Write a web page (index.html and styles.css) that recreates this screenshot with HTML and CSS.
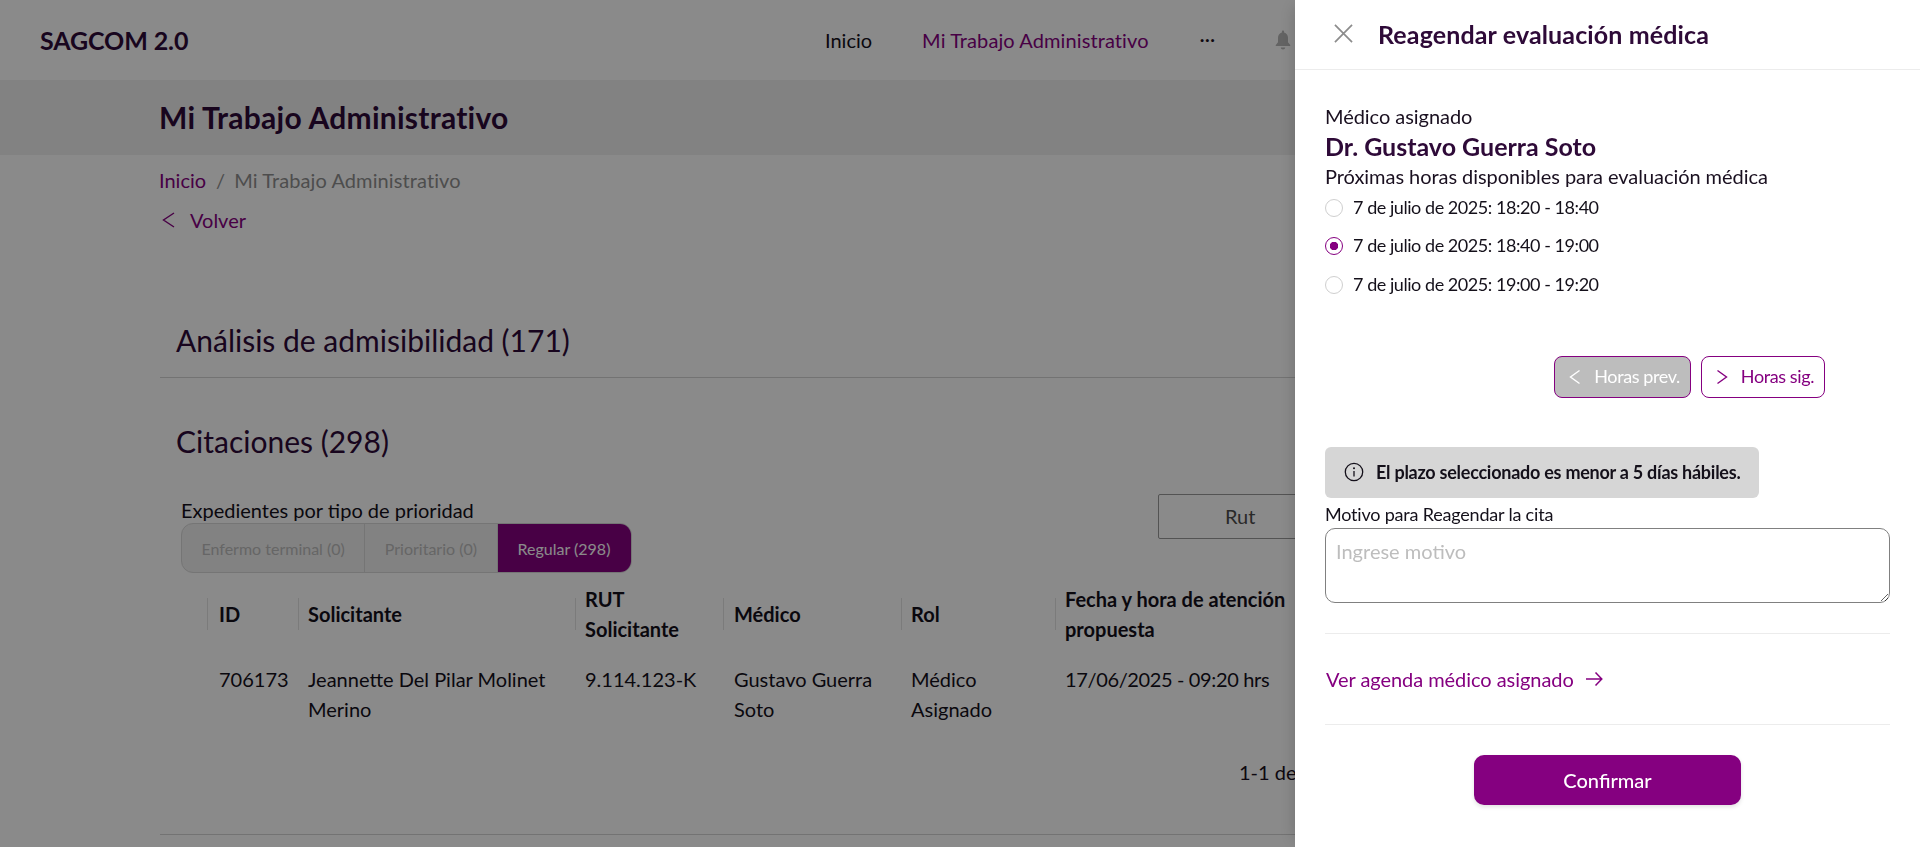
FILE: index.html
```html
<!DOCTYPE html>
<html lang="es">
<head>
  <meta charset="UTF-8" />
  <meta name="viewport" content="width=device-width, initial-scale=1" />
  <title>SAGCOM 2.0 - Mi Trabajo Administrativo</title>
  <link rel="stylesheet" href="styles.css">
</head>
<body>

  <header class="topbar">
    <div class="brand">SAGCOM 2.0</div>
    <nav class="topnav">
      <a class="navLink">Inicio</a>
      <a class="navLink navActive">Mi Trabajo Administrativo</a>
      <span class="navMore">···</span>
      <svg class="navBell" viewBox="0 0 16 20" aria-hidden="true">
        <path d="M8 0.5c.7 0 1.1.5 1.1 1.2v.7c2.5.6 3.9 2.7 3.9 5.3v4.6l2.2 2.7c.3.5 0 1-.5 1H1.3c-.5 0-.8-.5-.5-1L3 12.300V7.700c0-2.600 1.400-4.700 3.900-5.300v-.7C6.900 1 7.300.5 8 .5z"/>
        <path d="M5.800 17.500h4.400c0 1.200-1 2-2.200 2s-2.200-.8-2.200-2z"/>
      </svg>
    </nav>
  </header>

  <div class="titleBand">
    <h1>Mi Trabajo Administrativo</h1>
  </div>

  <main class="content">
    <div class="breadcrumb">
      <a>Inicio</a><span class="crumbSep">/</span><span class="crumbLast">Mi Trabajo Administrativo</span>
    </div>
    <a class="backLink">
      <svg class="chevron" viewBox="0 0 16 16" aria-hidden="true"><path d="M13 1 L2.500 8 L13 15"/></svg>
      Volver
    </a>

    <section class="panel panelFirst">
      <h2>Análisis de admisibilidad (171)</h2>
    </section>

    <section class="panel">
      <h2>Citaciones (298)</h2>
      <div class="filterRow">
        <div>
          <div class="filterLabel">Expedientes por tipo de prioridad</div>
          <div class="segments">
            <span class="segment">Enfermo terminal (0)</span>
            <span class="segment">Prioritario (0)</span>
            <span class="segment segmentActive">Regular (298)</span>
          </div>
        </div>
        <div class="rutBox">Rut</div>
      </div>

      <table class="grid">
        <thead>
          <tr>
            <th class="colId">ID</th>
            <th class="colName">Solicitante</th>
            <th class="colRut">RUT Solicitante</th>
            <th class="colDoc">Médico</th>
            <th class="colRole">Rol</th>
            <th class="colDate">Fecha y hora de atención propuesta</th>
          </tr>
        </thead>
        <tbody>
          <tr>
            <td class="colId">706173</td>
            <td>Jeannette Del Pilar Molinet Merino</td>
            <td>9.114.123-K</td>
            <td class="colDoc">Gustavo Guerra Soto</td>
            <td>Médico Asignado</td>
            <td class="dateCell">17/06/2025 - 09:20 hrs</td>
          </tr>
        </tbody>
      </table>

      <div class="pager">1-1 de 1</div>
    </section>
  </main>

  <div class="backdrop"></div>

  <aside class="drawer">
    <div class="drawerHead">
      <svg class="closeIcon" viewBox="0 0 20 20" aria-hidden="true"><path d="M1 1 L19 19 M19 1 L1 19"/></svg>
      <div class="drawerTitle">Reagendar evaluación médica</div>
    </div>

    <div class="drawerBody">
      <div class="fieldText">Médico asignado</div>
      <div class="doctorName">Dr. Gustavo Guerra Soto</div>
      <div class="fieldText">Próximas horas disponibles para evaluación médica</div>

      <div class="slots">
        <label class="slot"><input type="radio" name="slot" /><span>7 de julio de 2025: 18:20 - 18:40</span></label>
        <label class="slot"><input type="radio" name="slot" checked /><span>7 de julio de 2025: 18:40 - 19:00</span></label>
        <label class="slot"><input type="radio" name="slot" /><span>7 de julio de 2025: 19:00 - 19:20</span></label>
      </div>

      <div class="slotPager">
        <button class="pageBtn pageBtnOff" type="button">
          <svg class="chevron" viewBox="0 0 16 16" aria-hidden="true"><path d="M12.500 1.500 L3.500 8 L12.500 14.500"/></svg>
          Horas prev.
        </button>
        <button class="pageBtn" type="button">
          <svg class="chevron" viewBox="0 0 16 16" aria-hidden="true"><path d="M3.500 1.500 L12.500 8 L3.500 14.500"/></svg>
          Horas sig.
        </button>
      </div>

      <div class="notice">
        <svg class="infoIcon" viewBox="0 0 20 20" aria-hidden="true">
          <circle cx="10" cy="10" r="8.700"/>
          <path d="M10 9 V14.500"/>
          <circle class="infoDot" cx="10" cy="6.300" r="1"/>
        </svg>
        El plazo seleccionado es menor a 5 días hábiles.
      </div>

      <label class="reasonLabel" for="reason">Motivo para Reagendar la cita</label>
      <textarea id="reason" class="reason" placeholder="Ingrese motivo"></textarea>

      <div class="agendaRow">
        <a class="agendaLink">Ver agenda médico asignado</a>
        <svg class="arrowIcon" viewBox="0 0 18 18" aria-hidden="true"><path d="M1 9 H16.500 M10.500 2.500 L16.800 9 L10.500 15.500"/></svg>
      </div>

      <div class="confirmRow">
        <button class="confirmBtn" type="button">Confirmar</button>
      </div>
    </div>
  </aside>

</body>
</html>
```

FILE: styles.css
```css
* {
  box-sizing: border-box;
}

html, body {
  height: 100%;
}

body {
  margin: 0;
  overflow: hidden;
  background: #fff;
  color: #1a1020;
  font-family: 'Lato', 'Liberation Sans', sans-serif;
  font-size: 20px;
}

/* top bar */
.topbar {
  display: flex;
  align-items: center;
  height: 80px;
  padding-left: 40px;
}

.brand {
  font-size: 25px;
  font-weight: 700;
  letter-spacing: -0.1px;
  color: #2e0a38;
  margin-right: auto;
}

.topnav {
  display: flex;
  align-items: center;
  width: 1095px;
  flex-shrink: 0;
}

.navLink {
  color: #14101a;
  margin-right: 50px;
  font-size: 20px;
}

.navActive {
  color: #850080;
  letter-spacing: 0.1px;
}

.navMore {
  width: 20px;
  line-height: 1;
  margin-right: 55px;
  padding-bottom: 4px;
  margin-left: 1px;
}

.navBell {
  width: 16px;
  height: 20px;
  fill: #b8b8b8;
}

/* title */
.titleBand {
  height: 75px;
  background: #f0f0f0;
  padding: 0 0 2px 159px;
  display: flex;
  align-items: center;
}

h1 {
  margin: 0;
  font-size: 30px;
  font-weight: 700;
  letter-spacing: 0.25px;
  color: #2e0a38;
}

.content {
  padding: 12px 0 0 159px;
}

.breadcrumb {
  height: 26px;
  line-height: 26px;
  color: #8f8f8f;
}

.breadcrumb a {
  color: #850080;
}

.crumbSep {
  margin: 0 10px 0 10px;
  letter-spacing: -1px;
}

.crumbLast {
  letter-spacing: 0.1px;
}

.backLink {
  display: flex;
  align-items: center;
  gap: 13px;
  height: 26px;
  margin-top: 14px;
  padding-left: 2px;
  color: #850080;
}

.chevron {
  width: 16px;
  height: 16px;
  fill: none;
  stroke: currentColor;
  stroke-width: 1.4;
}

/* sections */
.panel {
  border-bottom: 1px solid #d4d4d4;
  margin-left: 1px;
  padding-left: 16px;
}

.panelFirst {
  margin-top: 87px;
  height: 58px;
}

h2 {
  margin: 0;
  font-size: 30px;
  font-weight: 400;
  line-height: 40px;
  color: #2e0a38;
}

.panel + .panel {
  padding-top: 43px;
  height: 457px;
}

.filterRow {
  display: flex;
  justify-content: space-between;
  align-items: flex-start;
  width: 1182px;
}

.filterLabel {
  margin: 37px 0 0 5px;
  height: 25px;
  line-height: 25px;
  color: #14101a;
}

.segments {
  display: inline-flex;
  height: 50px;
  margin-left: 5px;
  border: 1px solid #d8d8d8;
  border-radius: 12px;
  background: #f0f0f0;
  overflow: hidden;
}

.segment {
  display: flex;
  align-items: center;
  padding: 0 19.500px;
  font-size: 16px;
  color: #bcbcbc;
  border-right: 1px solid #d8d8d8;
}

.segmentActive {
  padding: 0 22px 0 20px;
  background: #850080;
  color: #fff;
  border-right: 0;
  margin: -1px -1px -1px 0;
}

.rutBox {
  width: 200px;
  height: 45px;
  margin-top: 33px;
  border: 1px solid #9a9a9a;
  border-radius: 2px;
  line-height: 43px;
  padding-left: 66px;
  color: #4d4d4d;
}

/* table */
.grid {
  border-collapse: collapse;
  table-layout: fixed;
  width: 1098px;
  margin: 11px 0 0 31px;
  line-height: 30px;
}

.colId { width: 91px; }
.colName { width: 277px; }
.colRut { width: 148px; }
.colDoc { width: 178px; }
.colRole { width: 154px; }
.colDate { width: 250px; }

.grid th {
  height: 60px;
  padding: 0 10px 0 10px;
  text-align: left;
  font-weight: 700;
  color: #14101a;
  background: linear-gradient(#e4e4e4, #e4e4e4) left center / 1px 32px no-repeat;
}

.grid th.colDate {
  padding-right: 0;
}

.grid td {
  vertical-align: top;
  padding: 20px 20px 0 10px;
  color: #14101a;
}

.grid .colId {
  padding-left: 12px;
}

.grid .colDoc {
  padding-left: 11px;
}

.grid td.dateCell {
  padding-right: 0;
  letter-spacing: -0.36px;
}

.pager {
  margin: 33px 0 0 1063px;
  white-space: nowrap;
  line-height: 30px;
}

/* dim layer */
.backdrop {
  position: fixed;
  inset: 0;
  background: rgba(0, 0, 0, 0.46);
}

/* drawer */
.drawer {
  position: fixed;
  top: 0;
  right: 0;
  bottom: 0;
  width: 625px;
  background: #fff;
  box-shadow: -6px 0 16px -6px rgba(0, 0, 0, 0.2);
}

.drawerHead {
  display: flex;
  align-items: center;
  height: 70px;
  border-bottom: 1px solid #ececec;
  padding: 0 0 2px 39px;
}

.closeIcon {
  width: 19px;
  height: 19px;
  fill: none;
  stroke: #8c8c8c;
  stroke-width: 1.8;
  margin-right: 25px;
}

.drawerTitle {
  font-size: 25px;
  font-weight: 700;
  letter-spacing: 0.13px;
  color: #2e0a38;
}

.drawerBody {
  padding: 30.500px 30px 0 30px;
}

.fieldText {
  height: 30px;
  line-height: 30px;
  letter-spacing: -0.05px;
  color: #1a1020;
}

.doctorName {
  height: 30px;
  line-height: 30px;
  font-size: 25px;
  font-weight: 700;
  color: #2e0a38;
}

.slots {
  margin-top: -3px;
}

.slot {
  display: flex;
  align-items: center;
  gap: 10px;
  height: 38.500px;
  font-size: 18px;
  letter-spacing: -0.45px;
  color: #14101a;
}

.slot input {
  appearance: none;
  width: 18px;
  height: 18px;
  margin: 2px 0 0 0;
  border: 1px solid #cfcfcf;
  border-radius: 50%;
  background: #fff;
}

.slot input:checked {
  border: 1.500px solid #850080;
  background: radial-gradient(circle, #850080 0 4px, #fff 4.500px);
}

.slotPager {
  display: flex;
  justify-content: flex-end;
  gap: 10px;
  margin: 52.500px 65px 0 0;
}

.pageBtn {
  display: flex;
  align-items: center;
  gap: 11px;
  height: 42px;
  padding: 0 10px 2px 12px;
  border: 1px solid #850080;
  border-radius: 8px;
  background: #fff;
  color: #850080;
  font-family: inherit;
  font-size: 18px;
  letter-spacing: -0.4px;
}

.pageBtn .chevron {
  margin-top: 2px;
}

.pageBtnOff {
  background: #bdbdbd;
  color: #fff;
}

.notice {
  display: flex;
  align-items: center;
  width: 434px;
  height: 51px;
  margin-top: 49px;
  padding-left: 19px;
  gap: 12px;
  border-radius: 6px;
  background: #d6d6d6;
  font-size: 18px;
  font-weight: 700;
  letter-spacing: -0.25px;
  color: #14101a;
}

.infoIcon {
  width: 20px;
  height: 20px;
  fill: none;
  stroke: #14101a;
  stroke-width: 1.300;
}

.infoDot {
  fill: #14101a;
  stroke: none;
}

.reasonLabel {
  display: block;
  height: 30px;
  line-height: 33px;
  font-size: 18px;
  letter-spacing: -0.2px;
  color: #14101a;
}

.reason {
  display: block;
  width: 100%;
  height: 75px;
  padding: 10px;
  border: 1px solid #808080;
  border-radius: 10px;
  font-family: inherit;
  font-size: 20px;
}

.reason::placeholder {
  color: #bdbdbd;
}

.agendaRow {
  display: flex;
  align-items: center;
  gap: 11px;
  height: 92px;
  margin-top: 30px;
  padding-left: 1px;
  border-top: 1px solid #ececec;
  border-bottom: 1px solid #ececec;
}

.agendaLink {
  color: #850080;
  letter-spacing: -0.05px;
}

.arrowIcon {
  width: 18px;
  height: 18px;
  fill: none;
  stroke: #850080;
  stroke-width: 1.500;
}

.confirmRow {
  display: flex;
  justify-content: center;
  padding-top: 30px;
}

.confirmBtn {
  width: 267px;
  height: 50px;
  border: none;
  border-radius: 10px;
  background: #850080;
  color: #fff;
  font-family: inherit;
  font-size: 20px;
  font-weight: 500;
  box-shadow: 0 2px 4px rgba(0, 0, 0, 0.12);
}
```
